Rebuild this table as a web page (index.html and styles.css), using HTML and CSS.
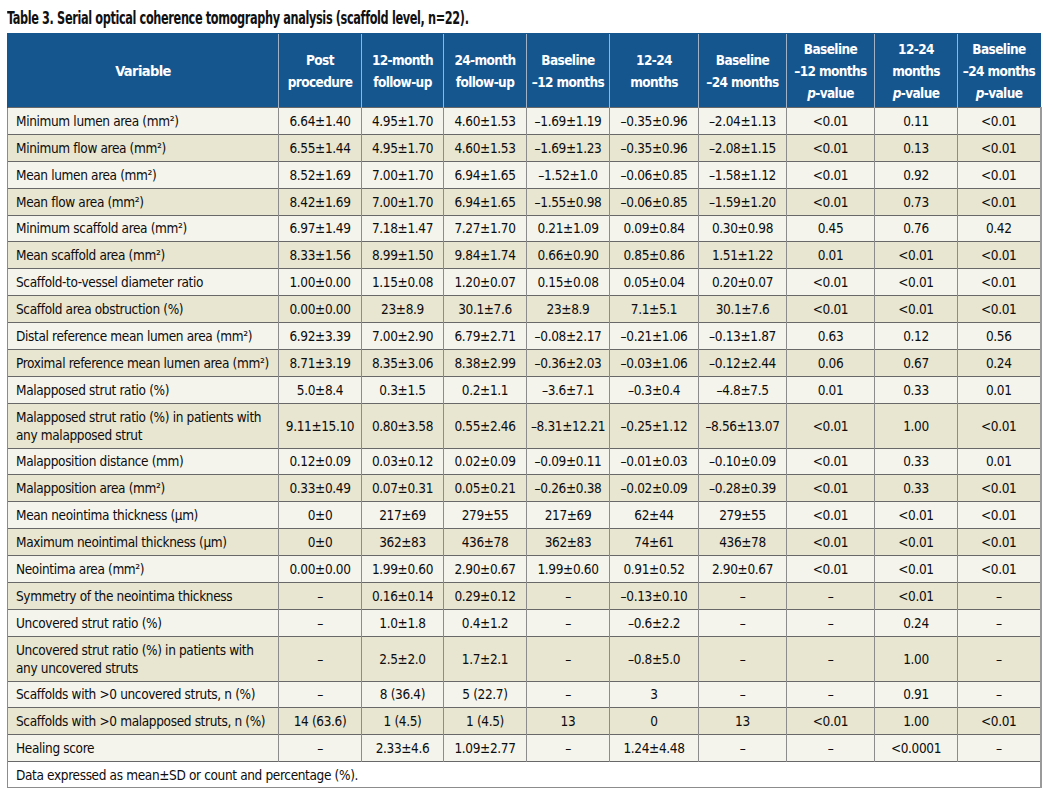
FILE: index.html
```html
<!DOCTYPE html>
<html lang="en">
<head>
<meta charset="utf-8">
<title>Table 3</title>
<link rel="stylesheet" href="styles.css">
</head>
<body>
<div class="page">
  <h1 class="title"><span class="title-text">Table 3. Serial optical coherence tomography analysis (scaffold level, n=22).</span></h1>
  <table class="data">
    <colgroup>
      <col class="c-var"><col class="c-a"><col class="c-b"><col class="c-a"><col class="c-a"><col class="c-w"><col class="c-x"><col class="c-x"><col class="c-a"><col class="c-a">
    </colgroup>
    <thead>
      <tr>
        <th>Variable</th>
        <th>Post<br>procedure</th>
        <th>12-month<br>follow-up</th>
        <th>24-month<br>follow-up</th>
        <th>Baseline<br>–12 months</th>
        <th>12-24<br>months</th>
        <th>Baseline<br>–24 months</th>
        <th>Baseline<br>–12 months<br><i>p</i>-value</th>
        <th>12-24<br>months<br><i>p</i>-value</th>
        <th>Baseline<br>–24 months<br><i>p</i>-value</th>
      </tr>
    </thead>
    <tbody>
      <tr><td>Minimum lumen area (mm²)</td><td>6.64±1.40</td><td>4.95±1.70</td><td>4.60±1.53</td><td>–1.69±1.19</td><td>–0.35±0.96</td><td>–2.04±1.13</td><td>&lt;0.01</td><td>0.11</td><td>&lt;0.01</td></tr>
      <tr><td>Minimum flow area (mm²)</td><td>6.55±1.44</td><td>4.95±1.70</td><td>4.60±1.53</td><td>–1.69±1.23</td><td>–0.35±0.96</td><td>–2.08±1.15</td><td>&lt;0.01</td><td>0.13</td><td>&lt;0.01</td></tr>
      <tr><td>Mean lumen area (mm²)</td><td>8.52±1.69</td><td>7.00±1.70</td><td>6.94±1.65</td><td>–1.52±1.0</td><td>–0.06±0.85</td><td>–1.58±1.12</td><td>&lt;0.01</td><td>0.92</td><td>&lt;0.01</td></tr>
      <tr><td>Mean flow area (mm²)</td><td>8.42±1.69</td><td>7.00±1.70</td><td>6.94±1.65</td><td>–1.55±0.98</td><td>–0.06±0.85</td><td>–1.59±1.20</td><td>&lt;0.01</td><td>0.73</td><td>&lt;0.01</td></tr>
      <tr><td>Minimum scaffold area (mm²)</td><td>6.97±1.49</td><td>7.18±1.47</td><td>7.27±1.70</td><td>0.21±1.09</td><td>0.09±0.84</td><td>0.30±0.98</td><td>0.45</td><td>0.76</td><td>0.42</td></tr>
      <tr><td>Mean scaffold area (mm²)</td><td>8.33±1.56</td><td>8.99±1.50</td><td>9.84±1.74</td><td>0.66±0.90</td><td>0.85±0.86</td><td>1.51±1.22</td><td>0.01</td><td>&lt;0.01</td><td>&lt;0.01</td></tr>
      <tr><td>Scaffold-to-vessel diameter ratio</td><td>1.00±0.00</td><td>1.15±0.08</td><td>1.20±0.07</td><td>0.15±0.08</td><td>0.05±0.04</td><td>0.20±0.07</td><td>&lt;0.01</td><td>&lt;0.01</td><td>&lt;0.01</td></tr>
      <tr><td>Scaffold area obstruction (%)</td><td>0.00±0.00</td><td>23±8.9</td><td>30.1±7.6</td><td>23±8.9</td><td>7.1±5.1</td><td>30.1±7.6</td><td>&lt;0.01</td><td>&lt;0.01</td><td>&lt;0.01</td></tr>
      <tr><td>Distal reference mean lumen area (mm²)</td><td>6.92±3.39</td><td>7.00±2.90</td><td>6.79±2.71</td><td>–0.08±2.17</td><td>–0.21±1.06</td><td>–0.13±1.87</td><td>0.63</td><td>0.12</td><td>0.56</td></tr>
      <tr><td>Proximal reference mean lumen area (mm²)</td><td>8.71±3.19</td><td>8.35±3.06</td><td>8.38±2.99</td><td>–0.36±2.03</td><td>–0.03±1.06</td><td>–0.12±2.44</td><td>0.06</td><td>0.67</td><td>0.24</td></tr>
      <tr><td>Malapposed strut ratio (%)</td><td>5.0±8.4</td><td>0.3±1.5</td><td>0.2±1.1</td><td>–3.6±7.1</td><td>–0.3±0.4</td><td>–4.8±7.5</td><td>0.01</td><td>0.33</td><td>0.01</td></tr>
      <tr><td>Malapposed strut ratio (%) in patients with<br>any malapposed strut</td><td>9.11±15.10</td><td>0.80±3.58</td><td>0.55±2.46</td><td>–8.31±12.21</td><td>–0.25±1.12</td><td>–8.56±13.07</td><td>&lt;0.01</td><td>1.00</td><td>&lt;0.01</td></tr>
      <tr><td>Malapposition distance (mm)</td><td>0.12±0.09</td><td>0.03±0.12</td><td>0.02±0.09</td><td>–0.09±0.11</td><td>–0.01±0.03</td><td>–0.10±0.09</td><td>&lt;0.01</td><td>0.33</td><td>0.01</td></tr>
      <tr><td>Malapposition area (mm²)</td><td>0.33±0.49</td><td>0.07±0.31</td><td>0.05±0.21</td><td>–0.26±0.38</td><td>–0.02±0.09</td><td>–0.28±0.39</td><td>&lt;0.01</td><td>0.33</td><td>&lt;0.01</td></tr>
      <tr><td>Mean neointima thickness (µm)</td><td>0±0</td><td>217±69</td><td>279±55</td><td>217±69</td><td>62±44</td><td>279±55</td><td>&lt;0.01</td><td>&lt;0.01</td><td>&lt;0.01</td></tr>
      <tr><td>Maximum neointimal thickness (µm)</td><td>0±0</td><td>362±83</td><td>436±78</td><td>362±83</td><td>74±61</td><td>436±78</td><td>&lt;0.01</td><td>&lt;0.01</td><td>&lt;0.01</td></tr>
      <tr><td>Neointima area (mm²)</td><td>0.00±0.00</td><td>1.99±0.60</td><td>2.90±0.67</td><td>1.99±0.60</td><td>0.91±0.52</td><td>2.90±0.67</td><td>&lt;0.01</td><td>&lt;0.01</td><td>&lt;0.01</td></tr>
      <tr><td>Symmetry of the neointima thickness</td><td>–</td><td>0.16±0.14</td><td>0.29±0.12</td><td>–</td><td>–0.13±0.10</td><td>–</td><td>–</td><td>&lt;0.01</td><td>–</td></tr>
      <tr><td>Uncovered strut ratio (%)</td><td>–</td><td>1.0±1.8</td><td>0.4±1.2</td><td>–</td><td>–0.6±2.2</td><td>–</td><td>–</td><td>0.24</td><td>–</td></tr>
      <tr><td>Uncovered strut ratio (%) in patients with<br>any uncovered struts</td><td>–</td><td>2.5±2.0</td><td>1.7±2.1</td><td>–</td><td>–0.8±5.0</td><td>–</td><td>–</td><td>1.00</td><td>–</td></tr>
      <tr><td>Scaffolds with &gt;0 uncovered struts, n (%)</td><td>–</td><td>8 (36.4)</td><td>5 (22.7)</td><td>–</td><td>3</td><td>–</td><td>–</td><td>0.91</td><td>–</td></tr>
      <tr><td>Scaffolds with &gt;0 malapposed struts, n (%)</td><td>14 (63.6)</td><td>1 (4.5)</td><td>1 (4.5)</td><td>13</td><td>0</td><td>13</td><td>&lt;0.01</td><td>1.00</td><td>&lt;0.01</td></tr>
      <tr><td>Healing score</td><td>–</td><td>2.33±4.6</td><td>1.09±2.77</td><td>–</td><td>1.24±4.48</td><td>–</td><td>–</td><td>&lt;0.0001</td><td>–</td></tr>
    </tbody>
    <tfoot>
      <tr><td colspan="10">Data expressed as mean±SD or count and percentage (%).</td></tr>
    </tfoot>
  </table>
</div>
</body>
</html>
```
FILE: styles.css
```css
html, body {
  margin: 0;
  padding: 0;
  background: #ffffff;
}

.page {
  padding: 7px 0 0 7px;
  font-family: "DejaVu Sans Condensed", "Liberation Sans", sans-serif;
  font-stretch: condensed;
  color: #111111;
}

.title {
  margin: 0 0 4px 0;
  font-size: 17px;
  line-height: 22px;
  letter-spacing: -0.5px;
  font-weight: bold;
  color: #111111;
  white-space: nowrap;
}

.title-text {
  display: inline-block;
  transform: scaleX(0.74);
  transform-origin: left center;
}

.data {
  width: 1033px;
  table-layout: fixed;
  border-collapse: collapse;
  font-size: 13.5px;
  letter-spacing: -0.35px;
  color: #0c0c0c;
}

.c-var { width: 271px; }
.c-a { width: 83px; }
.c-b { width: 82px; }
.c-w { width: 89px; }
.c-x { width: 88px; }

.data th {
  background: #16568f;
  color: #ffffff;
  font-weight: bold;
  font-size: 13.5px;
  letter-spacing: -0.6px;
  line-height: 22px;
  padding: 4px 0 3px;
  height: 66px;
  box-sizing: content-box;
  text-align: center;
  vertical-align: middle;
  white-space: nowrap;
  border-left: 1px solid #9fb2c6;
  border-top: 1px solid #16568f;
}

.data th:first-child {
  border-left: 1px solid #16568f;
  font-size: 14.5px;
}

.data th:last-child {
  border-right: 1px solid #16568f;
}

.data td {
  padding: 3.95px 0;
  line-height: 18px;
  text-align: center;
  vertical-align: middle;
  border-top: 1px solid #686868;
  border-left: 1px solid #8c8c8c;
  white-space: nowrap;
}

.data td:first-child {
  text-align: left;
  padding-left: 8px;
  padding-right: 2px;
}

.data td:last-child {
  border-right: 2px solid #9a9a9a;
}

.data tbody tr:nth-child(odd) td {
  background: #f4f4ec;
}

.data tbody tr:nth-child(even) td {
  background: #e8e5d1;
}

.data tfoot td {
  background: #ffffff;
  text-align: left;
  padding: 4px 0 3px 8px;
  border-bottom: 1px solid #8c8c8c;
}
```
